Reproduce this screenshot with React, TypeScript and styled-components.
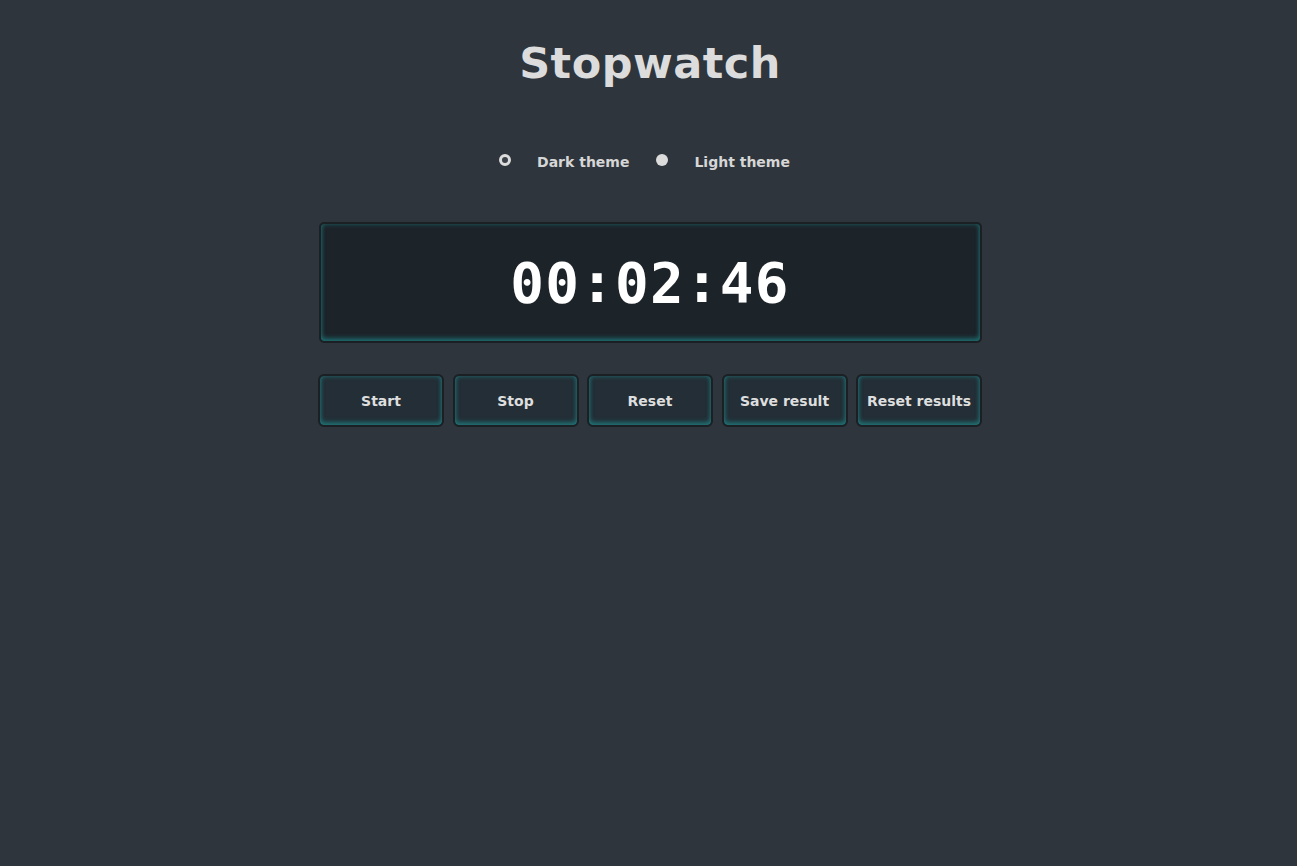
import React, { useState } from "react";
import styled, { createGlobalStyle } from "styled-components";

const Global = createGlobalStyle`
  html, body { margin: 0; padding: 0; background: #2e353c; }
  body { font-family: "DejaVu Sans", "Liberation Sans", sans-serif; color: #dcdcdc; }
`;

const Page = styled.main`
  min-height: 866px;
  display: flex;
  flex-direction: column;
  align-items: center;
  padding-top: 30px;
  padding-left: 3px;
  box-sizing: border-box;
`;

const Title = styled.h1`
  margin: 0;
  font-size: 43px;
  font-weight: 700;
  color: #dcdcdc;
  letter-spacing: 0.5px;
  line-height: 66px;
`;

const ThemeRow = styled.div`
  margin-top: 54px;
  display: flex;
  align-items: center;
  gap: 27px;
  height: 24px;
  padding-right: 11px;
`;

const ThemeOption = styled.label`
  display: flex;
  align-items: center;
  gap: 26px;
  font-size: 14px;
  font-weight: 700;
  color: #d6d6d6;
  cursor: pointer;
`;

const Radio = styled.span<{ $checked: boolean }>`
  width: 12px;
  height: 12px;
  border-radius: 50%;
  box-sizing: border-box;
  background: ${(p) => (p.$checked ? "#3a4148" : "#dcdcdc")};
  border: ${(p) => (p.$checked ? "3px solid #dcdcdc" : "none")};
  margin-top: -4px;
`;

const Display = styled.div`
  margin-top: 48px;
  width: 663px;
  height: 121px;
  box-sizing: border-box;
  border: 2px solid #1b2024;
  border-radius: 5px;
  background: #1c2329;
  box-shadow: inset 0 0 5px rgba(30, 160, 160, 0.45),
    inset 0 -3px 5px rgba(30, 160, 160, 0.45);
  display: flex;
  align-items: center;
  justify-content: center;
`;

const Time = styled.span`
  font-family: "DejaVu Sans Mono", "Liberation Mono", monospace;
  font-size: 56px;
  font-weight: 700;
  color: #ffffff;
  letter-spacing: 1.2px;
`;

const Buttons = styled.div`
  margin-top: 31px;
  display: grid;
  grid-template-columns: repeat(5, 126px);
  gap: 8.5px;
`;

const Button = styled.button`
  height: 53px;
  box-sizing: border-box;
  border: 2px solid #1b2024;
  border-radius: 6px;
  background: #232e36;
  box-shadow: inset 0 0 5px rgba(30, 160, 160, 0.5),
    inset 0 -3px 5px rgba(30, 160, 160, 0.45);
  color: #dedede;
  font-family: "DejaVu Sans", "Liberation Sans", sans-serif;
  font-size: 14px;
  font-weight: 700;
  cursor: pointer;
  padding: 0;
`;

export default function App() {
  const [theme, setTheme] = useState<"dark" | "light">("dark");
  return (
    <>
      <Global />
      <Page>
        <Title>Stopwatch</Title>
        <ThemeRow>
          <ThemeOption onClick={() => setTheme("dark")}>
            <Radio $checked={theme === "dark"} />
            Dark theme
          </ThemeOption>
          <ThemeOption onClick={() => setTheme("light")}>
            <Radio $checked={theme === "light"} />
            Light theme
          </ThemeOption>
        </ThemeRow>
        <Display>
          <Time>00:02:46</Time>
        </Display>
        <Buttons>
          <Button>Start</Button>
          <Button>Stop</Button>
          <Button>Reset</Button>
          <Button>Save result</Button>
          <Button>Reset results</Button>
        </Buttons>
      </Page>
    </>
  );
}
